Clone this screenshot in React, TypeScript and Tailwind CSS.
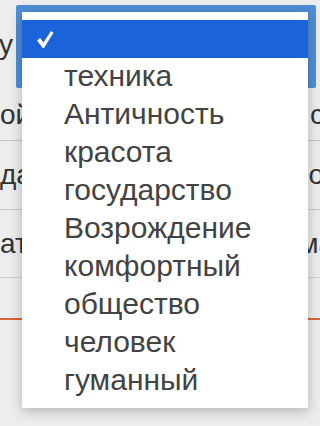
import React from "react";

const items = [
  "техника",
  "Античность",
  "красота",
  "государство",
  "Возрождение",
  "комфортный",
  "общество",
  "человек",
  "гуманный",
];

export default function App() {
  return (
    <div
      className="relative w-[320px] h-[426px] overflow-hidden bg-[#ededed] text-[#333]"
      style={{ fontFamily: '"Liberation Sans", Arial, sans-serif' }}
    >
      {/* background page */}
      <div className="flex flex-col text-[28px] leading-none">
        <div className="h-[90px] flex items-center justify-between">
          <span className="-ml-[1px]">у</span>
        </div>
        <div className="h-[51px] flex items-center justify-between border-b border-[#c8c8c8]">
          <span>ой</span>
          <span className="mr-[-4px]">с</span>
        </div>
        <div className="h-[69px] flex items-center justify-between border-b border-[#c8c8c8]">
          <span>да</span>
          <span className="mr-[-4px]">о</span>
        </div>
        <div className="h-[68px] flex items-center justify-between border-b border-[#d0d0d0]">
          <span>ат</span>
          <span className="mr-[-14px]">ма</span>
        </div>
        <div className="h-[40px]" />
        <div className="h-[2px] bg-[#d9663a]" />
      </div>

      {/* focused select ring */}
      <div className="absolute left-[16px] top-[5px] w-[300px] h-[83px] bg-[#4f8fd6] rounded-[2px]" />

      {/* popup */}
      <div className="absolute left-[22px] top-[12px] w-[286px] bg-white py-[8px] shadow-[0_3px_12px_rgba(0,0,0,0.25)] text-[#434343]">
        <div className="h-[38px] bg-[#1b63d9] flex items-center pl-[14px]">
          <svg width="18" height="19" viewBox="0 0 18 19">
            <path d="M1 10.5 L4.2 8 L7.4 12.5 L15 1 L17.5 2.8 L8 18 L6.6 18 Z" fill="white" />
          </svg>
        </div>
        {items.map((t) => (
          <div key={t} className="h-[38px] flex items-center pl-[42px] pb-[3px] text-[30px] leading-none">
            {t}
          </div>
        ))}
      </div>
    </div>
  );
}
